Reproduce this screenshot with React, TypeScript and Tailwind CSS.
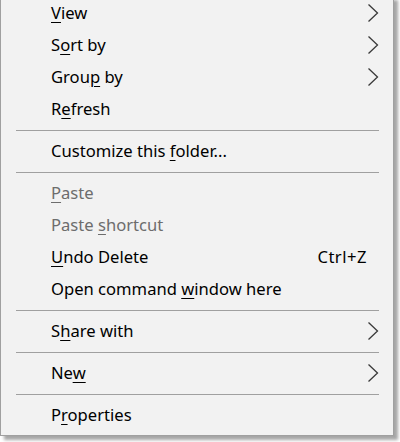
import React from "react";

type Item =
  | { type: "sep" }
  | {
      type: "item";
      label: React.ReactNode;
      disabled?: boolean;
      arrow?: boolean;
      shortcut?: string;
    };

const U = ({ children }: { children: React.ReactNode }) => (
  <span className="underline decoration-1 underline-offset-[3px]">{children}</span>
);

const items: Item[] = [
  { type: "item", label: <><U>V</U>iew</>, arrow: true },
  { type: "item", label: <>S<U>o</U>rt by</>, arrow: true },
  { type: "item", label: <>Grou<U>p</U> by</>, arrow: true },
  { type: "item", label: <>R<U>e</U>fresh</> },
  { type: "sep" },
  { type: "item", label: <>Customize this <U>f</U>older...</> },
  { type: "sep" },
  { type: "item", label: <><U>P</U>aste</>, disabled: true },
  { type: "item", label: <>Paste <U>s</U>hortcut</>, disabled: true },
  { type: "item", label: <><U>U</U>ndo Delete</>, shortcut: "Ctrl+Z" },
  { type: "item", label: <>Open command <U>w</U>indow here</> },
  { type: "sep" },
  { type: "item", label: <>S<U>h</U>are with</>, arrow: true },
  { type: "sep" },
  { type: "item", label: <>Ne<U>w</U></>, arrow: true },
  { type: "sep" },
  { type: "item", label: <>P<U>r</U>operties</> },
];

const Chevron = () => (
  <svg width="12" height="20" viewBox="0 0 12 20" className="block">
    <path d="M1.5 1.5 L10.5 10 L1.5 18.5" fill="none" stroke="#3a3a3a" strokeWidth="1.3" />
  </svg>
);

export default function App() {
  return (
    <div className="w-[400px] h-[442px] overflow-hidden bg-white">
      <div
        className="w-[394px] mt-[-4px] bg-[#f2f2f2] border border-[#a0a0a0] pb-[4px] shadow-[4px_4px_3px_rgba(0,0,0,0.35)] text-[16.6px] text-black"
        style={{ fontFamily: '"Noto Sans", "Open Sans", sans-serif' }}
      >
        {items.map((it, i) =>
          it.type === "sep" ? (
            <div key={i} className="h-[10px] flex items-center pl-[15px] pr-[14px]">
              <div className="h-px w-full bg-[#a0a0a0]" />
            </div>
          ) : (
            <div key={i} className="h-[32px] flex items-center pl-[50px] pr-[14px]">
              <span className={it.disabled ? "text-[#6d6d6d]" : "text-black"}>{it.label}</span>
              <div className="flex-1" />
              {it.shortcut && <span className="mr-[12px] tracking-[0.5px]">{it.shortcut}</span>}
              {it.arrow && <Chevron />}
            </div>
          )
        )}
      </div>
    </div>
  );
}
